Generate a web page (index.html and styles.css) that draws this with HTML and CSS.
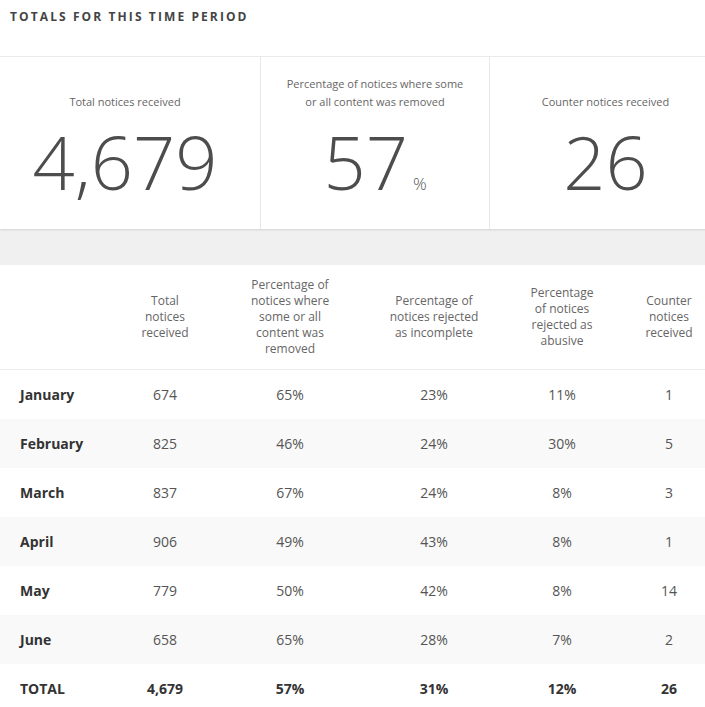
FILE: index.html
```html
<!DOCTYPE html>
<html lang="en">
<head>
<meta charset="utf-8">
<title>Totals for this time period</title>
<link rel="stylesheet" href="styles.css">
</head>
<body>
<div class="page">
  <h2 class="title">TOTALS FOR THIS TIME PERIOD</h2>
  <section class="stats">
    <div class="stat stat-first">
      <div class="stat-label">Total notices received</div>
      <div class="stat-value">4,679</div>
    </div>
    <div class="stat">
      <div class="stat-label">Percentage of notices where some<br>or all content was removed</div>
      <div class="stat-value">57<span class="unit">%</span></div>
    </div>
    <div class="stat">
      <div class="stat-label">Counter notices received</div>
      <div class="stat-value">26</div>
    </div>
  </section>
  <div class="spacer"></div>
  <section class="table">
    <div class="row head">
      <div class="cell month"></div>
      <div class="cell">Total<br>notices<br>received</div>
      <div class="cell">Percentage of<br>notices where<br>some or all<br>content was<br>removed</div>
      <div class="cell">Percentage of<br>notices rejected<br>as incomplete</div>
      <div class="cell">Percentage<br>of notices<br>rejected as<br>abusive</div>
      <div class="cell">Counter<br>notices<br>received</div>
    </div>
    <div class="row">
      <div class="cell month">January</div><div class="cell">674</div><div class="cell">65%</div><div class="cell">23%</div><div class="cell">11%</div><div class="cell">1</div>
    </div>
    <div class="row alt">
      <div class="cell month">February</div><div class="cell">825</div><div class="cell">46%</div><div class="cell">24%</div><div class="cell">30%</div><div class="cell">5</div>
    </div>
    <div class="row">
      <div class="cell month">March</div><div class="cell">837</div><div class="cell">67%</div><div class="cell">24%</div><div class="cell">8%</div><div class="cell">3</div>
    </div>
    <div class="row alt">
      <div class="cell month">April</div><div class="cell">906</div><div class="cell">49%</div><div class="cell">43%</div><div class="cell">8%</div><div class="cell">1</div>
    </div>
    <div class="row">
      <div class="cell month">May</div><div class="cell">779</div><div class="cell">50%</div><div class="cell">42%</div><div class="cell">8%</div><div class="cell">14</div>
    </div>
    <div class="row alt">
      <div class="cell month">June</div><div class="cell">658</div><div class="cell">65%</div><div class="cell">28%</div><div class="cell">7%</div><div class="cell">2</div>
    </div>
    <div class="row total">
      <div class="cell month">TOTAL</div><div class="cell">4,679</div><div class="cell">57%</div><div class="cell">31%</div><div class="cell">12%</div><div class="cell">26</div>
    </div>
  </section>
</div>
</body>
</html>
```

FILE: styles.css
```css
html, body {
  margin: 0;
  padding: 0;
  background: #fff;
}
body {
  font-family: "Open Sans", "Liberation Sans", sans-serif;
  color: #555;
  overflow: hidden;
}
.page {
  width: 705px;
  overflow: hidden;
}
.title {
  margin: 0;
  padding: 9px 0 0 10px;
  height: 47px;
  font-size: 12px;
  line-height: 16px;
  font-weight: 700;
  letter-spacing: 2.1px;
  color: #444;
  border-bottom: 1px solid #ececec;
}
.stats {
  display: grid;
  grid-template-columns: 260px 229px 232px;
  width: 721px;
  height: 172px;
  box-shadow: 0 1px 2px rgba(0, 0, 0, 0.12);
  position: relative;
  background: #fff;
}
.stat {
  display: flex;
  flex-direction: column;
  align-items: center;
  padding-top: 18px;
  border-left: 1px solid #e8e8e8;
}
.stat-first {
  border-left: none;
  padding-right: 10px;
}
.stat-label {
  height: 36px;
  display: flex;
  align-items: flex-end;
  text-align: center;
  font-size: 11px;
  line-height: 18px;
  color: #666;
}
.stat-value {
  margin-top: 12px;
  font-size: 74px;
  line-height: 77px;
  font-weight: 300;
  color: #4d4d4d;
}
.unit {
  font-size: 17px;
  margin-left: 5px;
  color: #555;
}
.spacer {
  height: 36px;
  background: #f0f0f0;
}
.row {
  display: grid;
  grid-template-columns: 130px 70px 180px 108px 148px 66px;
  height: 49px;
  align-items: center;
  font-size: 14px;
  color: #555;
}
.row.alt {
  background: #f9f9f9;
}
.row.head {
  height: 104px;
  border-bottom: 1px solid #ececec;
  font-size: 12px;
  line-height: 16px;
  color: #666;
}
.cell {
  text-align: center;
  white-space: nowrap;
}
.cell.month {
  text-align: left;
  padding-left: 20px;
  font-weight: 700;
  color: #333;
}
.row.total .cell {
  font-weight: 700;
  color: #333;
}
```
